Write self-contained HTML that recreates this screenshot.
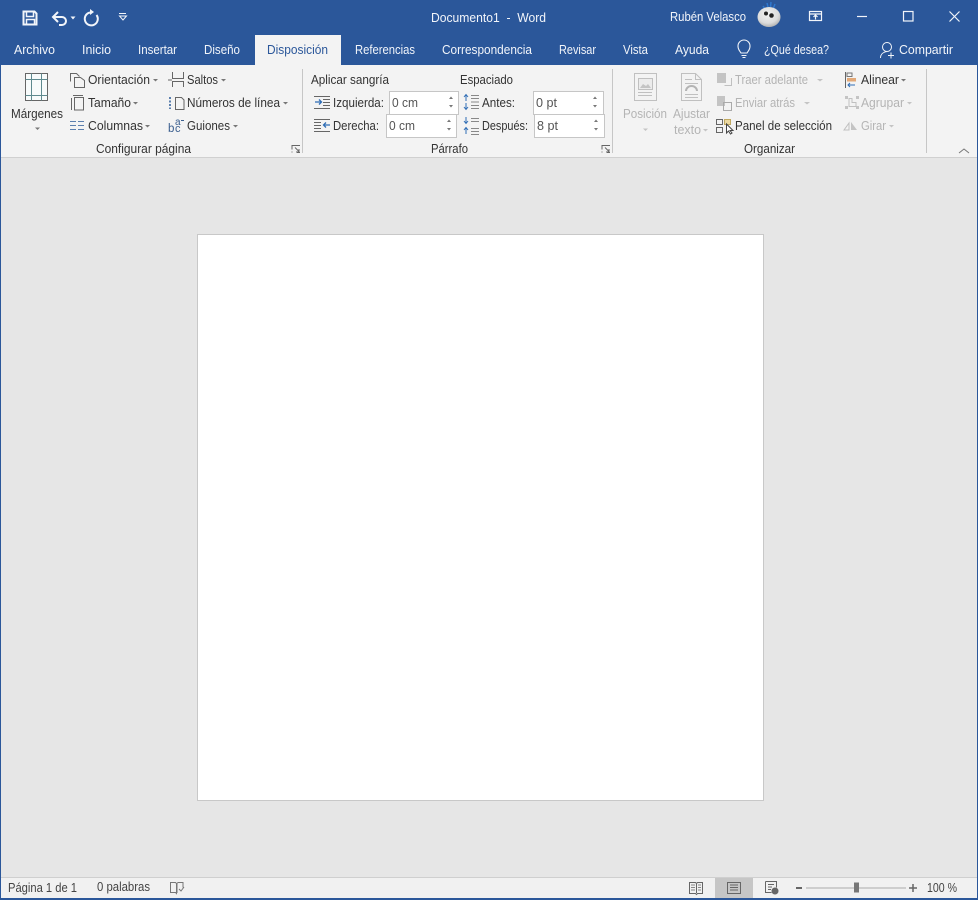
<!DOCTYPE html>
<html lang="es">
<head>
<meta charset="utf-8">
<title>Documento1 - Word</title>
<style>
html,body{margin:0;padding:0;width:978px;height:900px;overflow:hidden;background:#e6e6e6}
svg{display:block}
text{font-family:"Liberation Sans",sans-serif;font-size:12.5px;fill:#333}
.w text,text.w{fill:#f2f5fa}
.g text,text.g{fill:#b4b4b4}
.i{fill:none;stroke:#666;stroke-width:1}
.ig{fill:none;stroke:#c0c0c0;stroke-width:1}
.a{fill:#777}
.ag{fill:#c4c4c4}
.wi{fill:none;stroke:#f2f5fa;stroke-width:1.2}
</style>
</head>
<body>
<svg width="978" height="900" viewBox="0 0 978 900" xmlns="http://www.w3.org/2000/svg">
<defs>
<radialGradient id="av" cx="45%" cy="35%" r="70%">
<stop offset="0" stop-color="#f2f2f2"/><stop offset="0.65" stop-color="#dcdcdc"/><stop offset="1" stop-color="#a8a8a8"/>
</radialGradient>
</defs>
<!-- backgrounds -->
<rect width="978" height="900" fill="#e6e6e6"/>
<rect width="978" height="65" fill="#2b579a"/>
<rect y="65" width="978" height="92" fill="#f3f3f3"/>
<rect y="157" width="978" height="1" fill="#d0d0d0"/>
<rect y="877" width="978" height="21" fill="#f1f1f1"/>
<rect y="877" width="978" height="1" fill="#cfcfcf"/>
<rect y="898" width="978" height="2" fill="#2b579a"/>
<rect x="0" y="65" width="1" height="835" fill="#2b579a"/>
<rect x="977" y="65" width="1" height="835" fill="#2b579a"/>
<!-- page -->
<rect x="197.500" y="234.500" width="566" height="566" fill="#fff" stroke="#c8c8c8"/>
<!-- active tab -->
<rect x="255" y="35" width="86" height="31" fill="#f3f3f3"/>

<!-- QAT -->
<g class="wi">
  <path d="M23.500 11.500h11l2 2v11h-13z" stroke-width="2"/>
  <path d="M26.500 11.500v5h7v-5M26.500 24v-4.500h8V24" stroke-width="1.500"/>
  <path d="M54 17h8a4 4 0 0 1 0 8h-3" stroke-width="2"/>
  <path d="M58 12l-5 5 5 5" stroke-width="2"/>
  <path d="M90 11.500a6.500 6.500 0 1 0 6.500 2.500" stroke-width="2" transform="translate(0 1)"/>
  <path d="M90 9v6l4-3z" fill="#f2f5fa" stroke="none"/>
  <path d="M119 13.500h7" stroke-width="1"/>
</g>
<path d="M70.500 16.500h5l-2.500 3z" fill="#f2f5fa"/>
<path d="M119.500 16h7l-3.500 4z" fill="none" stroke="#f2f5fa"/>

<!-- Title -->
<g class="w">
<text x="431" y="22" textLength="115" lengthAdjust="spacingAndGlyphs" xml:space="preserve">Documento1  -  Word</text>
<text x="670" y="21" textLength="76" lengthAdjust="spacingAndGlyphs">Rubén Velasco</text>
<text x="14" y="54" textLength="41" lengthAdjust="spacingAndGlyphs">Archivo</text>
<text x="82" y="54" textLength="29" lengthAdjust="spacingAndGlyphs">Inicio</text>
<text x="138" y="54" textLength="39" lengthAdjust="spacingAndGlyphs">Insertar</text>
<text x="204" y="54" textLength="36" lengthAdjust="spacingAndGlyphs">Diseño</text>
<text x="355" y="54" textLength="60" lengthAdjust="spacingAndGlyphs">Referencias</text>
<text x="442" y="54" textLength="90" lengthAdjust="spacingAndGlyphs">Correspondencia</text>
<text x="559" y="54" textLength="37" lengthAdjust="spacingAndGlyphs">Revisar</text>
<text x="623" y="54" textLength="25" lengthAdjust="spacingAndGlyphs">Vista</text>
<text x="675" y="54" textLength="34" lengthAdjust="spacingAndGlyphs">Ayuda</text>
<text x="764" y="54" textLength="65" lengthAdjust="spacingAndGlyphs">¿Qué desea?</text>
<text x="899" y="54" textLength="54" lengthAdjust="spacingAndGlyphs">Compartir</text>
</g>
<text x="267" y="54" textLength="61" lengthAdjust="spacingAndGlyphs" style="fill:#2b579a">Disposición</text>

<!-- Avatar -->
<path d="M763 6l2 3M767 3l1 4M771 2l-.5 5M775 4l-1.500 4" stroke="#2f78cf" stroke-width="1.500"/>
<ellipse cx="769" cy="17" rx="11.500" ry="10" fill="url(#av)"/>
<circle cx="766" cy="13.500" r="2" fill="#222"/>
<circle cx="771.500" cy="15.500" r="2.300" fill="#222"/>

<!-- window buttons -->
<g class="wi">
  <rect x="809.500" y="11.500" width="12" height="9"/>
  <path d="M809.500 14h12M815.500 19.500v-4M813.500 17l2-2 2 2"/>
  <path d="M857 16.500h10"/>
  <rect x="903.500" y="11.500" width="9.500" height="9.500"/>
  <path d="M949.500 11.500l10 10M959.500 11.500l-10 10"/>
</g>
<!-- bulb, share -->
<g class="wi">
  <path d="M741 53c-1-2-3-3-3-7a6 6 0 0 1 12 0c0 4-2 5-3 7z" stroke-width="1.100"/>
  <path d="M741.500 55.500h5M742.500 57.500h3" stroke-width="1"/>
  <circle cx="887" cy="47" r="4.500" stroke-width="1"/>
  <path d="M880.500 58c0-4 3-6 6.500-6.500M888 55.500h6M891 52.500v6" stroke-width="1"/>
</g>

<!-- Separators -->
<g fill="#c6c6c6">
<rect x="302" y="69" width="1" height="84"/>
<rect x="612" y="69" width="1" height="84"/>
<rect x="926" y="69" width="1" height="84"/>
</g>

<!-- Márgenes icon -->
<g class="i">
  <rect x="25.500" y="73.500" width="22" height="27" fill="#f8fbfb"/>
  <path d="M25.500 79.500h22M25.500 95.500h22M31.500 73.500v27M41.500 73.500v27" stroke="#5f8a8f"/>
</g>
<text x="11" y="118" textLength="52" lengthAdjust="spacingAndGlyphs">Márgenes</text>
<path class="a" d="M35 127.500h5l-2.500 2.500z"/>

<!-- Configurar página col 1 -->
<text x="88" y="84" textLength="62" lengthAdjust="spacingAndGlyphs">Orientación</text>
<path class="a" d="M153 79h5l-2.500 2.500z"/>
<text x="88" y="107" textLength="43" lengthAdjust="spacingAndGlyphs">Tamaño</text>
<path class="a" d="M133 102h5l-2.500 2.500z"/>
<text x="88" y="130" textLength="55" lengthAdjust="spacingAndGlyphs">Columnas</text>
<path class="a" d="M145 125h5l-2.500 2.500z"/>
<g class="i">
  <path d="M70.500 81.500v-8h6l3 3"/>
  <path d="M74.500 85.500v-7h6l4 3v7h-10z" transform="translate(0 -1)"/>
  <rect x="74.500" y="97.500" width="9" height="12.500"/>
  <path d="M71.500 98v12M73 95.500h10"/>
  <path d="M70 121.500h6M70 125.500h6M70 129.500h6M78 121.500h6M78 125.500h6M78 129.500h6" stroke="#5b7fae"/>
</g>

<!-- col 2 -->
<text x="187" y="84" textLength="31" lengthAdjust="spacingAndGlyphs">Saltos</text>
<path class="a" d="M221 79h5l-2.500 2.500z"/>
<text x="187" y="107" textLength="93" lengthAdjust="spacingAndGlyphs">Números de línea</text>
<path class="a" d="M283 102h5l-2.500 2.500z"/>
<text x="187" y="130" textLength="43" lengthAdjust="spacingAndGlyphs">Guiones</text>
<path class="a" d="M233 125h5l-2.500 2.500z"/>
<g class="i">
  <path d="M172.500 72v6.500h11V72M172.500 87v-5.500h11V87M168 80h4"/>
  <path d="M175.500 97.500h6l2.500 2.500v9.500h-8.500z"/>
  <path d="M170 97v12" stroke="#5b7fae" stroke-dasharray="2 1.500" stroke-width="2"/>
</g>
<text x="168" y="132" style="font-size:11.500px;fill:#3b5f8f">b</text>
<text x="175" y="125" style="font-size:10px;fill:#3b5f8f">a</text>
<text x="175" y="132" style="font-size:11px;fill:#3b5f8f">c</text>
<path d="M181 120.500h3" stroke="#3b5f8f"/>

<text x="96" y="153" textLength="95" lengthAdjust="spacingAndGlyphs">Configurar página</text>

<!-- launchers -->
<g class="i" stroke-width="0.800">
  <path d="M292 149.500v-4h8M300 152.500h-3M292 152.500v-1M295 147.500l4 4M299 149v3h-3"/>
  <path d="M602 149.500v-4h8M610 152.500h-3M602 152.500v-1M605 147.500l4 4M609 149v3h-3"/>
</g>

<!-- Párrafo -->
<text x="311" y="84" textLength="78" lengthAdjust="spacingAndGlyphs">Aplicar sangría</text>
<text x="460" y="84" textLength="53" lengthAdjust="spacingAndGlyphs">Espaciado</text>
<text x="333" y="107" textLength="51" lengthAdjust="spacingAndGlyphs">Izquierda:</text>
<text x="333" y="130" textLength="46" lengthAdjust="spacingAndGlyphs">Derecha:</text>
<text x="482" y="107" textLength="33" lengthAdjust="spacingAndGlyphs">Antes:</text>
<text x="482" y="130" textLength="46" lengthAdjust="spacingAndGlyphs">Después:</text>
<text x="431" y="153" textLength="37" lengthAdjust="spacingAndGlyphs">Párrafo</text>

<g fill="#fff" stroke="#c6c6c6">
  <rect x="389.500" y="91.500" width="69" height="23"/>
  <rect x="386.500" y="114.500" width="70" height="23"/>
  <rect x="533.500" y="91.500" width="70" height="23"/>
  <rect x="534.500" y="114.500" width="70" height="23"/>
</g>
<text x="392" y="107" textLength="26" lengthAdjust="spacingAndGlyphs" style="fill:#555">0 cm</text>
<text x="389" y="130" textLength="26" lengthAdjust="spacingAndGlyphs" style="fill:#555">0 cm</text>
<text x="536" y="107" textLength="21" lengthAdjust="spacingAndGlyphs" style="fill:#555">0 pt</text>
<text x="537" y="130" textLength="21" lengthAdjust="spacingAndGlyphs" style="fill:#555">8 pt</text>
<g class="a">
  <path d="M449 99l2-2.500 2 2.500zM449 105l2 2.500 2-2.500z"/>
  <path d="M447 122l2-2.500 2 2.500zM447 128l2 2.500 2-2.500z"/>
  <path d="M593 99l2-2.500 2 2.500zM593 105l2 2.500 2-2.500z"/>
  <path d="M594 122l2-2.500 2 2.500zM594 128l2 2.500 2-2.500z"/>
</g>

<!-- indent icons -->
<g class="i" stroke="#777">
  <path d="M314 96.500h16M323 99.500h7M323 102.500h7M323 105.500h7M314 108.500h16"/>
  <path d="M314 119.500h16M314 122.500h7M314 125.500h7M314 128.500h7M314 131.500h16"/>
  <path d="M471 95.500h8M471 98.500h8M471 105.500h8M471 108.500h8M471 102h8" stroke="#888"/>
  <path d="M471 118.500h8M471 121.500h8M471 128.500h8M471 131.500h8M471 134.500h8" stroke="#888"/>
</g>
<g fill="none" stroke="#2f6db5" stroke-width="1.300">
  <path d="M315 102h6M319 99.500l2.500 2.500-2.500 2.500"/>
  <path d="M330 125h-6M326 122.500l-2.500 2.500 2.500 2.500"/>
  <path d="M466 95v6M464 97l2-2.500 2 2.500M466 103v6M464 107l2 2.500 2-2.500" stroke-width="1"/>
  <path d="M466 117v6M464 121l2 2.500 2-2.500M466 128v6M464 130l2-2.500 2 2.500" stroke-width="1"/>
</g>

<!-- Organizar -->
<g class="ig">
  <rect x="634.500" y="73.500" width="22" height="27"/>
  <rect x="638.500" y="78.500" width="14" height="11" fill="#ececec"/>
  <path d="M640 88l3-4 3 2 2-2 3 4" fill="#c4c4c4" stroke="none"/>
  <path d="M638 92.500h14M638 95.500h14"/>
  <path d="M681.500 73.500h14l6 6v21h-20z"/>
  <path d="M695.500 73.500v6h6M685 79.500h7M685 83.500h13M685 94.500h13M685 97.500h13"/>
  <path d="M686 91a5.500 5 0 0 1 11 0" stroke-width="2" stroke="#b4b4b4"/>
</g>
<g class="g">
<text x="623" y="118" textLength="44" lengthAdjust="spacingAndGlyphs">Posición</text>
<text x="673" y="118" textLength="37" lengthAdjust="spacingAndGlyphs">Ajustar</text>
<text x="674" y="134" textLength="27" lengthAdjust="spacingAndGlyphs">texto</text>
<text x="735" y="84" textLength="73" lengthAdjust="spacingAndGlyphs">Traer adelante</text>
<text x="735" y="107" textLength="60" lengthAdjust="spacingAndGlyphs">Enviar atrás</text>
<text x="861" y="107" textLength="43" lengthAdjust="spacingAndGlyphs">Agrupar</text>
<text x="861" y="130" textLength="25" lengthAdjust="spacingAndGlyphs">Girar</text>
</g>
<g class="ag">
  <path d="M643 128.500h5l-2.500 2.500z"/>
  <path d="M703 129h5l-2.500 2.500z"/>
  <path d="M817 79h6l-3 2.500z"/>
  <path d="M804 102h6l-3 2.500z"/>
  <path d="M907 102h5l-2.500 2.500z"/>
  <path d="M889 125h5l-2.500 2.500z"/>
  <rect x="717" y="73" width="9" height="10"/>
  <rect x="717" y="96" width="8" height="10"/>
</g>
<g class="ig">
  <path d="M731.500 78v7.500h-7"/>
  <rect x="723.500" y="102.500" width="8" height="8" stroke="#aaa"/>
  <path d="M845 96h3v3h-3zM856 96h3v3h-3zM845 106h3v3h-3zM856 106h3v3h-3z" fill="#c4c4c4" stroke="none"/>
  <path d="M849 98.500h3v4h4v4h-7z"/>
  <path d="M844 130l5-7v7z"/>
  <path d="M851 122v8h6z" fill="#c4c4c4" stroke="none"/>
</g>
<text x="735" y="130" textLength="97" lengthAdjust="spacingAndGlyphs">Panel de selección</text>
<g class="i">
  <rect x="716.500" y="119.500" width="6" height="5"/>
  <rect x="716.500" y="127.500" width="6" height="5"/>
  <rect x="724.500" y="119.500" width="6" height="5" fill="#ecd9a0" stroke="#c0a860"/>
  <path d="M726.500 124v9l2-2 2 3 1.500-1-2-2.500h3z" fill="#fff" stroke="#444"/>
</g>
<text x="861" y="84" textLength="38" lengthAdjust="spacingAndGlyphs">Alinear</text>
<path class="a" d="M901 79h5l-2.500 2.500z"/>
<path d="M845.500 72v16" stroke="#666" fill="none"/>
<rect x="847" y="73" width="5" height="3.500" fill="none" stroke="#777"/>
<rect x="847" y="78" width="9" height="3.500" fill="#e2a877"/>
<path d="M855 85h-7M850 83l-2 2 2 2" stroke="#2f6db5" fill="none"/>

<text x="744" y="153" textLength="51" lengthAdjust="spacingAndGlyphs">Organizar</text>
<path d="M959 153l5-4 5 4" fill="none" stroke="#777"/>

<!-- Status bar -->
<text x="8" y="892" textLength="69" lengthAdjust="spacingAndGlyphs" style="fill:#444">Página 1 de 1</text>
<text x="97" y="891" textLength="53" lengthAdjust="spacingAndGlyphs" style="fill:#444">0 palabras</text>
<path d="M170.500 882.500h5l1 1v10l-1-1h-5zM177 883.500l1-1h5v5M177 884v9" fill="none" stroke="#777"/>
<path d="M179 889l2 2 3-4" fill="none" stroke="#777"/>

<rect x="715" y="878" width="38" height="20" fill="#c6c6c6"/>
<g fill="none" stroke="#666">
  <path d="M689.500 882.500h6l1 1 1-1h5v11h-5l-1 1-1-1h-6zM696.500 884v9"/>
  <path d="M691 885h4M691 887.500h4M691 890h4M698 885h3M698 887.500h3M698 890h3" stroke="#888"/>
  <rect x="727.500" y="882.500" width="13" height="11"/>
  <path d="M730 885h8M730 887.500h8M730 890h8"/>
  <path d="M765.500 881.500h11v6M765.500 881.500v11h6M768 884.500h6M768 887h4M768 889.500h3"/>
</g>
<circle cx="775" cy="891" r="3.500" fill="#666"/>
<path d="M796 888h6" stroke="#666" stroke-width="2"/>
<path d="M806 888h100" stroke="#aaa"/>
<rect x="854" y="882.500" width="5" height="10" fill="#777"/>
<path d="M909 888h8M913 884v8" stroke="#666" stroke-width="1.500"/>
<text x="927" y="892" textLength="30" lengthAdjust="spacingAndGlyphs" style="fill:#444">100 %</text>
</svg>
</body>
</html>
